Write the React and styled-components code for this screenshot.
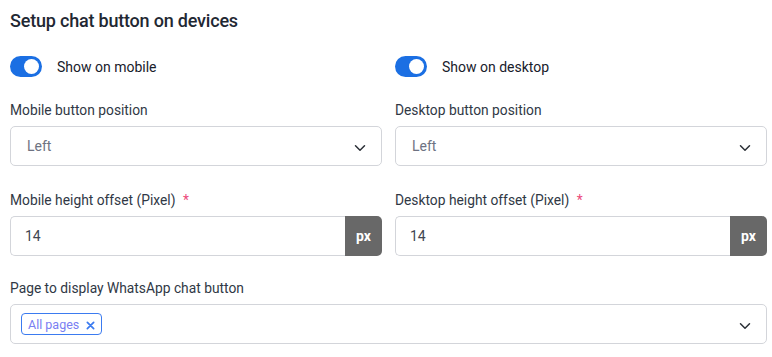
import styled, { createGlobalStyle } from 'styled-components'

const GlobalStyle = createGlobalStyle`
  body {
    margin: 0;
    background: #ffffff;
    font-family: Roboto, "Liberation Sans", sans-serif;
  }
`

function Chevron() {
  return (
    <svg width='12' height='8' viewBox='0 0 12 8' fill='none'>
      <path d='M1.5 1.8L6 6.2L10.5 1.8' stroke='#2a2f36' strokeWidth='1.5' strokeLinecap='round' strokeLinejoin='round' />
    </svg>
  )
}

function Toggle({ label }) {
  return (
    <ToggleRow>
      <Switch>
        <Knob />
      </Switch>
      <span>{label}</span>
    </ToggleRow>
  )
}

function SelectField({ label, value }) {
  return (
    <Field>
      <Label>{label}</Label>
      <SelectBox>
        <span>{value}</span>
        <Chevron />
      </SelectBox>
    </Field>
  )
}

function OffsetField({ label, value }) {
  return (
    <Field>
      <Label>
        {label} <Required>*</Required>
      </Label>
      <InputGroup>
        <InputText>{value}</InputText>
        <Addon>px</Addon>
      </InputGroup>
    </Field>
  )
}

function App() {
  return (
    <Wrapper>
      <GlobalStyle />
      <Title>Setup chat button on devices</Title>
      <Row $top={25}>
        <Toggle label='Show on mobile' />
        <Toggle label='Show on desktop' />
      </Row>
      <Row $top={23}>
        <SelectField label='Mobile button position' value='Left' />
        <SelectField label='Desktop button position' value='Left' />
      </Row>
      <Row $top={24}>
        <OffsetField label='Mobile height offset (Pixel)' value='14' />
        <OffsetField label='Desktop height offset (Pixel)' value='14' />
      </Row>
      <Field $top={22}>
        <Label>Page to display WhatsApp chat button</Label>
        <SelectBox $multi>
          <Chip>
            All pages
            <svg width='9' height='9' viewBox='0 0 10 10'>
              <path d='M1.5 1.5L8.5 8.5M8.5 1.5L1.5 8.5' stroke='#3b7bf0' strokeWidth='1.9' strokeLinecap='round' />
            </svg>
          </Chip>
          <Chevron />
        </SelectBox>
      </Field>
    </Wrapper>
  )
}

const Wrapper = styled.div`
  padding: 10px 5px 0 10px;
  color: #212b36;
`

const Title = styled.h2`
  margin: 0;
  font-size: 18px;
  line-height: 21px;
  font-weight: 500;
  letter-spacing: -0.2px;
  color: #1f2833;
`

const Row = styled.div`
  display: grid;
  grid-template-columns: 1fr 1fr;
  column-gap: 13px;
  margin-top: ${(p) => p.$top}px;
`

const ToggleRow = styled.div`
  display: flex;
  align-items: center;
  gap: 15px;
  height: 21px;
  font-size: 14px;
  font-weight: 400;
  color: #18202b;
`

const Switch = styled.div`
  width: 32px;
  height: 21px;
  border-radius: 11px;
  background: #1b6fe3;
  display: flex;
  align-items: center;
  justify-content: flex-end;
  padding-right: 3px;
  box-sizing: border-box;
`

const Knob = styled.div`
  width: 15px;
  height: 15px;
  border-radius: 50%;
  background: #ffffff;
`

const Field = styled.div`
  display: flex;
  flex-direction: column;
  gap: 6px;
  margin-top: ${(p) => p.$top || 0}px;
`

const Label = styled.div`
  font-size: 13.8px;
  line-height: 20px;
  font-weight: 400;
  color: #303845;
`

const Required = styled.span`
  color: #ec4a7b;
  margin-left: 4px;
`

const SelectBox = styled.div`
  height: 40px;
  box-sizing: border-box;
  border: 1px solid #d3d5da;
  border-radius: 5px;
  display: flex;
  align-items: center;
  justify-content: space-between;
  padding: 0 15px 0 ${(p) => (p.$multi ? 10 : 16)}px;
  font-size: 14px;
  color: #6e7282;

  svg {
    margin-top: 3px;
  }
`

const InputGroup = styled.div`
  height: 40px;
  display: flex;
`

const InputText = styled.div`
  flex: 1;
  display: flex;
  align-items: center;
  padding-left: 14px;
  border: 1px solid #d3d5da;
  border-right: none;
  border-radius: 5px 0 0 5px;
  font-size: 14px;
  color: #3f4652;
`

const Addon = styled.div`
  width: 37px;
  display: flex;
  align-items: center;
  justify-content: center;
  background: #686868;
  color: #ffffff;
  font-size: 14px;
  font-weight: 700;
  border-radius: 0 5px 5px 0;
`

const Chip = styled.div`
  height: 22px;
  box-sizing: border-box;
  display: flex;
  align-items: center;
  gap: 7px;
  padding: 0 6px;
  border: 1px solid #3b7bf0;
  border-radius: 4px;
  font-size: 12.5px;
  color: #7a80f2;
`

export default App
